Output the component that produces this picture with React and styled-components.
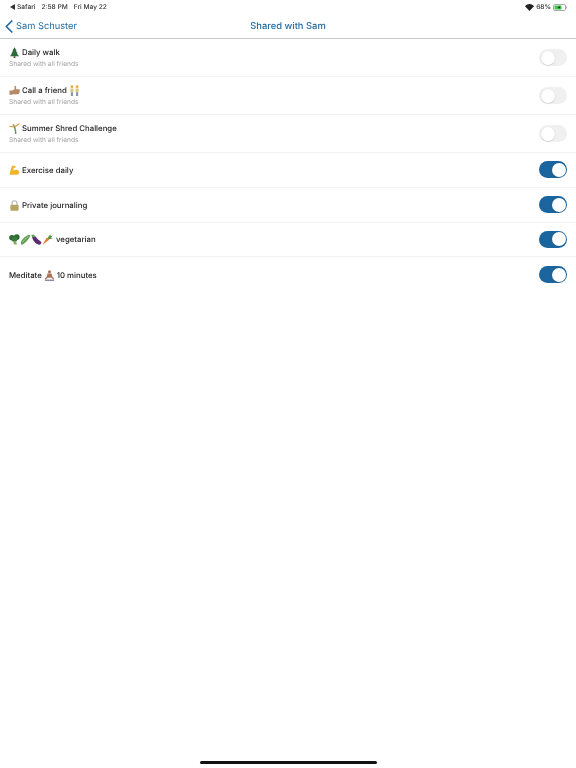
import React from "react";
import styled, { createGlobalStyle } from "styled-components";

const GlobalStyle = createGlobalStyle`
  html, body { margin: 0; padding: 0; background: #fff; }
  body {
    font-family: Inter, "Liberation Sans", sans-serif;
    color: #222;
    text-rendering: geometricPrecision;
  }
`;

const Page = styled.div`
  width: 576px;
  height: 768px;
  display: flex;
  flex-direction: column;
  overflow: hidden;
  will-change: transform;
`;

const StatusBar = styled.div`
  height: 14px;
  padding: 0 9px 0 10px;
  display: flex;
  align-items: center;
  justify-content: space-between;
  font-size: 6.6px;
  font-weight: 500;
  color: #333;
`;

const StatusGroup = styled.div`
  display: flex;
  align-items: center;
  gap: ${(props) => props.gap || 2}px;
`;

const NavBar = styled.div`
  height: 24px;
  padding: 0 5px;
  display: grid;
  grid-template-columns: 1fr auto 1fr;
  align-items: center;
  border-bottom: 1px solid #c9c9c9;
  color: #1f6aa5;
`;

const BackLink = styled.div`
  display: flex;
  align-items: center;
  gap: 3px;
  font-size: 9.3px;
`;

const NavTitle = styled.div`
  font-size: 9.4px;
  font-weight: 500;
`;

const Row = styled.div`
  height: ${(props) => (props.$sub ? 38 : 34.75)}px;
  box-sizing: border-box;
  padding: 0 9px;
  display: flex;
  align-items: center;
  justify-content: space-between;
  border-bottom: ${(props) => (props.$last ? "none" : "1px solid #f1f1f1")};
`;

const RowText = styled.div`
  display: flex;
  flex-direction: column;
  gap: 2.5px;
  padding-top: 1px;
`;

const Title = styled.div`
  display: flex;
  align-items: center;
  gap: 2px;
  font-size: 7.8px;
  font-weight: 500;
  line-height: 11px;
  color: #222;
`;

const EmojiGroup = styled.div`
  display: flex;
  align-items: center;
  margin-right: ${(props) => props.$end || 0}px;
`;

const Subtitle = styled.div`
  font-size: 6.6px;
  line-height: 9px;
  color: #a3a3a3;
`;

const Track = styled.div`
  width: 28px;
  height: 17px;
  box-sizing: border-box;
  border-radius: 9px;
  padding: 1.5px;
  display: flex;
  justify-content: ${(props) => (props.$on ? "flex-end" : "flex-start")};
  background: ${(props) => (props.$on ? "#1b659f" : "#f0f0f0")};
`;

const Knob = styled.div`
  width: 14px;
  height: 14px;
  border-radius: 50%;
  background: #fff;
  box-shadow: 0 0.5px 1.5px rgba(0, 0, 0, 0.2);
`;

const Spacer = styled.div`
  flex: 1;
`;

const HomeBar = styled.div`
  width: 177px;
  height: 3px;
  margin: 0 auto 4px;
  border-radius: 2px;
  background: #111;
`;

const Emoji = styled.svg`
  width: 11px;
  height: 11px;
  flex: none;
`;

const Tree = () => (
  <Emoji viewBox="0 0 12 12">
    <path d="M6 .2 8.300 4H7.500L9.500 7H8.600l2.400 3.200H1L3.400 7H2.500l2-3H3.700z" fill="#2f6b3a" />
    <rect x="5" y="10" width="2" height="2" fill="#7a4a2a" />
  </Emoji>
);

const Thumb = () => (
  <Emoji viewBox="0 0 12 12">
    <path d="M.5 6h3L6 4.500V1.500c0-1 1.600-1 1.700.3L7.800 4.500H11.200c.9 0 .9 1.100.4 1.400.5.600.3 1.300-.2 1.500.3.700 0 1.300-.5 1.400.2.700-.1 1.200-.8 1.200H4l-.5.500H.5z" fill="#b58a68" />
  </Emoji>
);

const Holding = () => (
  <Emoji viewBox="0 0 12 12">
    <circle cx="3.200" cy="1.800" r="1.600" fill="#e2b04a" />
    <circle cx="8.800" cy="1.800" r="1.600" fill="#e2b04a" />
    <path d="M1.500 3.800h3.400v4.200H1.500zM7.100 3.800h3.400v4.200H7.100z" fill="#d9c77f" />
    <path d="M2 8h2.400v4H2zM7.600 8H10v4H7.600z" fill="#8a95a5" />
  </Emoji>
);

const Gymnast = () => (
  <Emoji viewBox="0 0 12 12">
    <path d="M.8 3.800 6 4.200l5-3.200" stroke="#d9a441" strokeWidth="1.300" fill="none" strokeLinecap="round" />
    <circle cx="5" cy="2.400" r="1.200" fill="#c99a6b" />
    <path d="M6 4.200 7 8l.3 3.500" stroke="#5f9a58" strokeWidth="1.600" fill="none" strokeLinecap="round" />
  </Emoji>
);

const Muscle = () => (
  <Emoji viewBox="0 0 12 12">
    <path d="M3.300.8h3.200l1 1.600-1.400 1-.9-.6-.5 3.200c1.900-1.300 4.800-1 6.100.7.900 2-.2 4-2.700 4H2.300C.9 10.700.5 9.500.9 8.400z" fill="#f0b429" />
  </Emoji>
);

const Lock = () => (
  <Emoji viewBox="0 0 12 12">
    <path d="M3.300 5.500V3.500a2.700 2.700 0 0 1 5.400 0v2" stroke="#b5b5b5" strokeWidth="1.200" fill="none" />
    <rect x="1.500" y="5.200" width="9" height="6.500" rx="1" fill="#b3a564" />
  </Emoji>
);

const Broccoli = () => (
  <Emoji viewBox="0 0 12 12">
    <circle cx="3.200" cy="4" r="3" fill="#2f6b35" />
    <circle cx="8.400" cy="3.400" r="3.200" fill="#2f6b35" />
    <circle cx="6" cy="5.800" r="3" fill="#3a7c3f" />
    <path d="M4.800 7.500h2.800l1 4H5.300z" fill="#7fae58" />
  </Emoji>
);

const Cucumber = () => (
  <Emoji viewBox="0 0 12 12">
    <path d="M1 10.800C.5 8 3.500 3.500 9 1c1.800-.6 2.500.6 1.800 1.800C8.800 7 5.200 10.300 3 11.500c-.9.300-1.700 0-2-.7z" fill="#5c9e52" />
    <path d="M3 9c1-2 3-4 6-6" stroke="#b7d79a" strokeWidth=".9" fill="none" />
  </Emoji>
);

const Eggplant = () => (
  <Emoji viewBox="0 0 12 12">
    <path d="M1 2.500c2.200-.9 4 0 5.500 2s3.300 2.500 4.400 4c.9 1.700-.3 3.300-2.300 3.100C5.300 11.300 1.500 7 1 2.500z" fill="#5b2c6f" />
    <path d="M.3.800 3.500.8l1.200 2.400-3.500.6z" fill="#5c9e52" />
  </Emoji>
);

const Carrot = () => (
  <Emoji viewBox="0 0 12 12">
    <path d="M.5 11.800 5 4.300c1.300-1 3.200.4 2.600 2.200z" fill="#ec7a24" />
    <path d="M6.500 4.500C6.800 2.800 8 1.200 9.700.5L9.100 2.400 11.500 1.800 9.800 3.800 11.800 4.600 7.800 5.700z" fill="#4f8f3c" />
  </Emoji>
);

const Meditate = () => (
  <Emoji viewBox="0 0 12 12">
    <circle cx="6" cy="2" r="1.700" fill="#a9765a" />
    <path d="M3.800 3.800h4.400l.8 3.200 2.200 2.500-1.100.9L8 8.500H4L1.900 10.400l-1.100-.9L3 7z" fill="#a9765a" />
    <path d="M1 10.500h10v1.300H1z" fill="#7f6a8f" />
  </Emoji>
);

const Chevron = () => (
  <svg width="8" height="13" viewBox="0 0 8 13">
    <path d="M6.800 1 1.300 6.500l5.500 5.500" stroke="#1f6aa5" strokeWidth="1.700" fill="none" strokeLinecap="round" strokeLinejoin="round" />
  </svg>
);

const BackTriangle = () => (
  <svg width="5" height="6" viewBox="0 0 5 6">
    <path d="M5 0v6L0 3z" fill="#333" />
  </svg>
);

const Wifi = () => (
  <svg width="9" height="7" viewBox="0 0 9 7">
    <path d="M4.500 7 0 2.200C2.500-.7 6.500-.7 9 2.200z" fill="#222" />
  </svg>
);

const Battery = () => (
  <svg width="14" height="7" viewBox="0 0 14 7">
    <rect x=".5" y=".5" width="12" height="6" rx="1.500" fill="#fff" stroke="#aaa" />
    <rect x="1.500" y="1.500" width="7" height="4" rx=".6" fill="#3cc94a" />
    <path d="M6.500 1.500 4.800 3.800h1.200L5.500 5.500l2-2.500H6.300z" fill="#111" />
    <rect x="13" y="2.500" width="1" height="2" fill="#aaa" />
  </svg>
);

const rows = [
  { label: "Daily walk", before: [Tree], on: false, sub: true },
  { label: "Call a friend", before: [Thumb], after: [Holding], on: false, sub: true },
  { label: "Summer Shred Challenge", before: [Gymnast], on: false, sub: true },
  { label: "Exercise daily", before: [Muscle], on: true },
  { label: "Private journaling", before: [Lock], on: true },
  { label: "vegetarian", before: [Broccoli, Cucumber, Eggplant, Carrot], on: true },
  { label: "Meditate", after: [Meditate], tail: "10 minutes", on: true },
];

const App = () => {
  return (
    <Page>
      <GlobalStyle />
      <StatusBar>
        <StatusGroup gap={6}>
          <StatusGroup>
            <BackTriangle />
            Safari
          </StatusGroup>
          <span>2:58 PM</span>
          <span>Fri May 22</span>
        </StatusGroup>
        <StatusGroup>
          <Wifi />
          <span>68%</span>
          <Battery />
        </StatusGroup>
      </StatusBar>
      <NavBar>
        <BackLink>
          <Chevron />
          Sam Schuster
        </BackLink>
        <NavTitle>Shared with Sam</NavTitle>
      </NavBar>
      {rows.map((row, i) => (
        <Row key={i} $sub={row.sub} $last={i === rows.length - 1}>
          <RowText>
            <Title>
              {row.before && (
                <EmojiGroup $end={row.before.length > 1 ? 1 : 0}>
                  {row.before.map((Icon, j) => <Icon key={j} />)}
                </EmojiGroup>
              )}
              <span>{row.label}</span>
              {row.after && (
                <EmojiGroup>
                  {row.after.map((Icon, j) => <Icon key={j} />)}
                </EmojiGroup>
              )}
              {row.tail && <span>{row.tail}</span>}
            </Title>
            {row.sub && <Subtitle>Shared with all friends</Subtitle>}
          </RowText>
          <Track $on={row.on}>
            <Knob />
          </Track>
        </Row>
      ))}
      <Spacer />
      <HomeBar />
    </Page>
  );
};

export default App;
